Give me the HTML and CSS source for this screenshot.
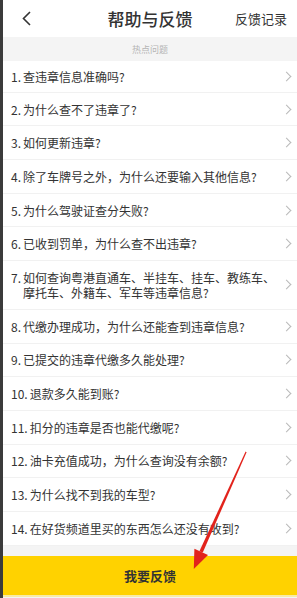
FILE: index.html
```html
<!DOCTYPE html>
<html lang="zh-CN">
<head>
    <meta charset="UTF-8">
    <meta name="viewport" content="width=device-width, initial-scale=1.0">
    <title>帮助与反馈</title>
    <link rel="stylesheet" href="styles.css">
</head>
<body>
    <div class="app">
        <header class="topbar">
            <a class="back" href="#">
                <svg width="11" height="15" viewBox="0 0 11 15"><path d="M9 1 L2.5 7.5 L9 14" fill="none" stroke="#333" stroke-width="1.6"/></svg>
            </a>
            <h1>帮助与反馈</h1>
            <a class="records" href="#">反馈记录</a>
        </header>

        <div class="section-title">热点问题</div>

        <ul class="faq">
            <li><span class="num">1.</span><span class="q">查违章信息准确吗?</span><i class="arrow"></i></li>
            <li><span class="num">2.</span><span class="q">为什么查不了违章了?</span><i class="arrow"></i></li>
            <li><span class="num">3.</span><span class="q">如何更新违章?</span><i class="arrow"></i></li>
            <li><span class="num">4.</span><span class="q">除了车牌号之外，为什么还要输入其他信息?</span><i class="arrow"></i></li>
            <li><span class="num">5.</span><span class="q">为什么驾驶证查分失败?</span><i class="arrow"></i></li>
            <li><span class="num">6.</span><span class="q">已收到罚单，为什么查不出违章?</span><i class="arrow"></i></li>
            <li><span class="num">7.</span><span class="q">如何查询粤港直通车、半挂车、挂车、教练车、摩托车、外籍车、军车等违章信息?</span><i class="arrow"></i></li>
            <li><span class="num">8.</span><span class="q">代缴办理成功，为什么还能查到违章信息?</span><i class="arrow"></i></li>
            <li><span class="num">9.</span><span class="q">已提交的违章代缴多久能处理?</span><i class="arrow"></i></li>
            <li><span class="num">10.</span><span class="q">退款多久能到账?</span><i class="arrow"></i></li>
            <li><span class="num">11.</span><span class="q">扣分的违章是否也能代缴呢?</span><i class="arrow"></i></li>
            <li><span class="num">12.</span><span class="q">油卡充值成功，为什么查询没有余额?</span><i class="arrow"></i></li>
            <li><span class="num">13.</span><span class="q">为什么找不到我的车型?</span><i class="arrow"></i></li>
            <li><span class="num">14.</span><span class="q">在好货频道里买的东西怎么还没有收到?</span><i class="arrow"></i></li>
        </ul>

        <div class="spacer"></div>
        <button class="feedback-btn">我要反馈</button>
    </div>

    <!-- red annotation arrow over the page -->
    <svg class="annotation" width="297" height="598" viewBox="0 0 297 598">
        <polygon points="245.6,451.6 246.6,452.2 202.8,552.6 199.4,551.2" fill="#e2231c"/>
        <polygon points="194.4,548.8 208,555 193.8,569" fill="#e2231c"/>
    </svg>
</body>
</html>
```

FILE: styles.css
```css
/* Basic reset */
* {
    margin: 0;
    padding: 0;
    box-sizing: border-box;
}

body {
    font-family: 'Noto Sans CJK SC', 'Noto Sans', sans-serif;
    color: #333;
    background-color: #3b3b3b;
    width: 297px;
    height: 598px;
    overflow: hidden;
    position: relative;
}

.app {
    margin-left: 3px;
    height: 598px;
    background-color: #f4f4f4;
    display: flex;
    flex-direction: column;
}

/* Top bar */
.topbar {
    height: 37px;
    background-color: #fff;
    display: flex;
    align-items: center;
    justify-content: space-between;
    padding: 0 10px 0 18px;
    position: relative;
}

.topbar .back {
    display: flex;
    width: 11px;
    height: 15px;
}

.topbar h1 {
    font-size: 17px;
    font-weight: 500;
    color: #333;
    position: absolute;
    left: 0;
    right: 0;
    text-align: center;
    pointer-events: none;
}

.topbar .records {
    font-size: 13px;
    color: #333;
    text-decoration: none;
}

/* Section title */
.section-title {
    height: 24px;
    padding-top: 6px;
    font-size: 9px;
    line-height: 14px;
    color: #b5b5b5;
    text-align: center;
}

/* Question list */
.faq {
    list-style: none;
    background-color: #fff;
}

.faq li {
    display: flex;
    align-items: center;
    padding: 8.85px 6px 8.85px 8px;
    border-bottom: 1px solid #f1f1f1;
    font-size: 12px;
    line-height: 15px;
    color: #333;
}

.faq li:first-child {
    padding-top: 7.85px;
    padding-bottom: 7.85px;
}

.faq .num {
    align-self: flex-start;
    margin-right: 2px;
}

.faq .q {
    flex: 1;
    padding-right: 6px;
}

.faq .arrow {
    width: 7px;
    height: 10px;
    flex-shrink: 0;
    position: relative;
}

.faq .arrow::after {
    content: '';
    position: absolute;
    left: -1px;
    top: 1.5px;
    width: 6px;
    height: 6px;
    border-top: 1.3px solid #b9b9b9;
    border-right: 1.3px solid #b9b9b9;
    transform: rotate(45deg);
}

.spacer {
    height: 10px;
}

/* Bottom button */
.feedback-btn {
    height: 41px;
    border: none;
    border-bottom: 2px solid #f8eba6;
    background-color: #ffd200;
    font-family: inherit;
    font-size: 13px;
    font-weight: 700;
    color: #333;
    cursor: pointer;
}

.annotation {
    position: absolute;
    left: 0;
    top: 0;
    pointer-events: none;
}
```
